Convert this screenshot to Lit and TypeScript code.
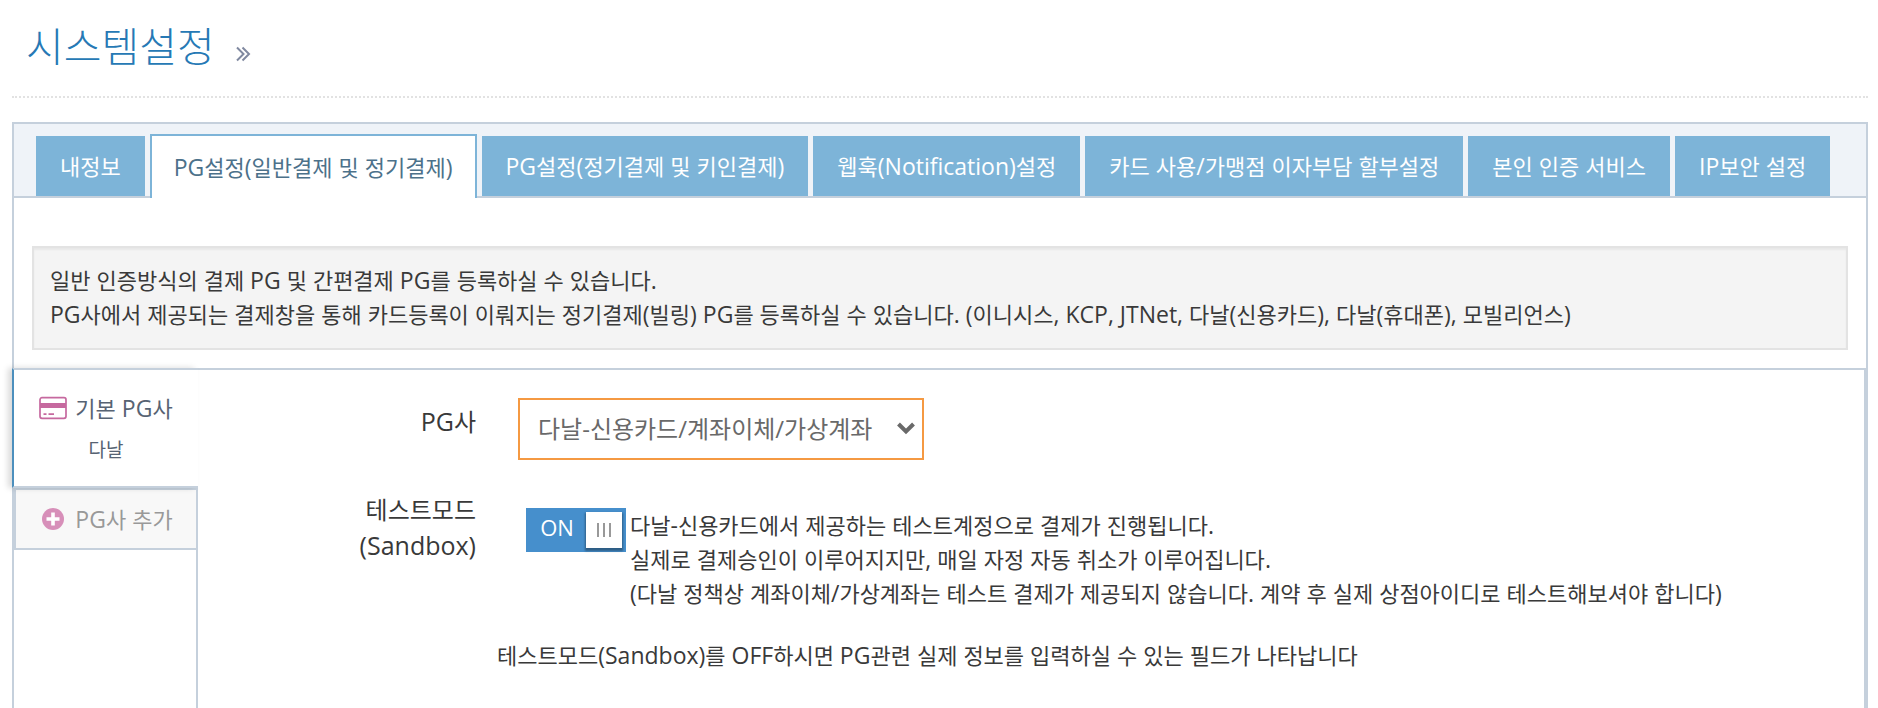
import { LitElement, html, css } from "lit";
import { customElement, state } from "lit/decorators.js";

const TABS = [
  "내정보",
  "PG설정(일반결제 및 정기결제)",
  "PG설정(정기결제 및 키인결제)",
  "웹훅(Notification)설정",
  "카드 사용/가맹점 이자부담 할부설정",
  "본인 인증 서비스",
  "IP보안 설정",
];

/* Latin runs are set a little larger than the Hangul around them. */
const mixed = (text: string) =>
  text
    .split(/([\x20-\x7e]+)/)
    .filter(Boolean)
    .map((part) => (/^[\x20-\x7e]/.test(part) ? html`<span class="latin">${part}</span>` : part));

@customElement("app-root")
export class AppRoot extends LitElement {
  @state() private activeTab = 1;
  @state() private sandbox = true;

  static styles = css`
    :host {
      display: flex;
      flex-direction: column;
      box-sizing: border-box;
      min-height: 100vh;
      padding: 0 10px 0 12px;
      background: #fff;
      color: #393939;
      font-family: "Open Sans", "Noto Sans CJK KR", sans-serif;
      font-size: 22px;
      line-height: 34px;
      word-break: keep-all;
    }
    * {
      box-sizing: border-box;
    }
    button,
    select {
      font: inherit;
      margin: 0;
      border-radius: 0;
      cursor: pointer;
    }
    p {
      margin: 0;
    }
    .latin {
      font-size: 23px;
      line-height: 1;
    }
    .header {
      display: flex;
      align-items: center;
      gap: 20px;
      padding: 14px 14px 22px;
      border-bottom: 2px dotted #e2e2e2;
      margin-bottom: 24px;
    }
    .title {
      margin: 0;
      color: #2679b5;
      font-size: 41px;
      line-height: 60px;
      font-weight: 300;
      font-family: "Noto Sans CJK KR", sans-serif;
    }
    .more {
      width: 16px;
      height: 16px;
      margin-top: 20px;
      fill: none;
      stroke: #8089a0;
      stroke-width: 2;
    }
    .panel {
      flex: 1;
      display: flex;
      flex-direction: column;
      border: 2px solid #c5d0dc;
      border-bottom: 0;
    }
    .tabs {
      display: flex;
      align-items: flex-end;
      gap: 5px;
      padding: 10px 22px 0;
      background: #eff3f8;
      border-bottom: 2px solid #c5d0dc;
    }
    .tab {
      padding: 0 24px;
      height: 60px;
      border: 0;
      background: #7db4d8;
      color: #fff;
      white-space: nowrap;
    }
    .tab.active {
      height: 64px;
      padding: 0 22px;
      margin-bottom: -2px;
      background: #fff;
      border: 2px solid #7db4d8;
      border-bottom: 0;
      color: #4c718a;
    }
    .notice {
      margin: 48px 18px 18px;
      padding: 15px 16px 17px;
      border: 2px solid #e3e3e3;
      background: #f4f4f4;
      box-shadow: inset 0 2px 2px rgba(0, 0, 0, 0.05);
    }
    .body {
      flex: 1;
      display: flex;
    }
    .side {
      flex: none;
      width: 184px;
      display: flex;
      flex-direction: column;
      border-right: 2px solid #c5d0dc;
    }
    .pg {
      position: relative;
      margin: 0 -2px 0 -2px;
      padding: 18px 0 16px;
      border: 0 solid #c5d0dc;
      border-width: 2px 0;
      border-left: 2px solid #4c8fbd;
      background: #fff;
      color: #576373;
      box-shadow: -4px 0 6px rgba(0, 0, 0, 0.15);
      text-align: center;
      height: 120px;
    }
    .add {
      height: 62px;
      padding: 0;
      border: 2px solid #c5d0dc;
      border-right: 0;
      background: #f8f8f8;
      color: #999;
    }
    .row {
      display: flex;
      align-items: center;
      justify-content: center;
      gap: 8px;
      height: 40px;
    }
    .row svg {
      flex: none;
      width: 28px;
      height: 24px;
    }
    .sub {
      display: block;
      font-size: 19px;
      line-height: 44px;
    }
    .form {
      flex: 1;
      padding: 28px 16px 0 0;
      border-top: 2px solid #c5d0dc;
      border-right: 2px solid #c5d0dc;
      display: grid;
      grid-template-columns: 278px minmax(0, 1fr);
      column-gap: 42px;
      align-content: start;
    }
    .label {
      font-size: 24px;
      line-height: 36px;
      text-align: right;
      padding-top: 6px;
    }
    .label .latin {
      font-size: 25px;
    }
    .picker {
      position: relative;
      width: 406px;
      max-width: 100%;
    }
    .picker select {
      width: 100%;
      height: 62px;
      padding: 0 40px 0 18px;
      appearance: none;
      border: 2px solid #f59942;
      background: #fff;
      color: #696969;
      font-size: 24px;
    }
    .picker svg {
      position: absolute;
      right: 8px;
      top: 22px;
      width: 20px;
      height: 16px;
      pointer-events: none;
    }
    .mode {
      display: flex;
      align-items: flex-start;
      gap: 4px;
      padding: 48px 0 0 8px;
    }
    .mode-label {
      padding-top: 32px;
    }
    .switch {
      flex: none;
      display: flex;
      width: 100px;
      height: 44px;
      background: #468fcc;
      color: #fff;
      cursor: pointer;
      position: relative;
    }
    .switch input {
      position: absolute;
      inset: 0;
      width: 100%;
      height: 100%;
      margin: 0;
      opacity: 0;
      cursor: pointer;
    }
    .switch.off {
      flex-direction: row-reverse;
      background: #8b9aa3;
    }
    .state {
      flex: 1;
      padding-left: 6px;
      text-align: center;
      line-height: 38px;
      font-weight: 500;
    }
    .knob {
      width: 36px;
      margin: 4px;
      background: #fff;
      box-shadow: 0 2px 2px 1px rgba(0, 0, 0, 0.35);
      display: flex;
      align-items: center;
      justify-content: center;
      gap: 4px;
    }
    .knob i {
      width: 2px;
      height: 14px;
      background: #999;
    }
    .help {
      grid-column: 1 / -1;
      padding: 28px 0 28px 299px;
    }
  `;

  render() {
    return html`
      <header class="header">
        <h1 class="title">시스템설정</h1>
        <svg class="more" viewBox="0 0 16 16" aria-hidden="true">
          <path d="M2 1.5 8.5 8 2 14.5M7.500 1.500 14 8 7.500 14.500" />
        </svg>
      </header>
      <main class="panel">
        <nav class="tabs" role="tablist">
          ${TABS.map(
            (label, i) => html`<button
              class="tab ${i === this.activeTab ? "active" : ""}"
              role="tab"
              aria-selected=${i === this.activeTab}
              @click=${() => (this.activeTab = i)}
            >${mixed(label)}</button>`
          )}
        </nav>
        <div class="notice">
          <p>${mixed("일반 인증방식의 결제 PG 및 간편결제 PG를 등록하실 수 있습니다.")}</p>
          <p>${mixed("PG사에서 제공되는 결제창을 통해 카드등록이 이뤄지는 정기결제(빌링) PG를 등록하실 수 있습니다. (이니시스, KCP, JTNet, 다날(신용카드), 다날(휴대폰), 모빌리언스)")}</p>
        </div>
        <div class="body">
          <div class="side">
            <button class="pg">
              <span class="row">
                <svg viewBox="0 0 28 24" aria-hidden="true">
                  <rect x="1" y="1.700" width="26" height="20.600" rx="2" fill="none" stroke="#c6699f" stroke-width="1.700" />
                  <path fill="#c6699f" d="M1 7h26v5H1zM4.500 17.200h3v1.800h-3zM9.500 17.200h5.500v1.800H9.500z" />
                </svg>
                <span>${mixed("기본 PG사")}</span>
              </span>
              <span class="sub">다날</span>
            </button>
            <button class="add">
              <span class="row">
                <svg viewBox="0 0 28 24" aria-hidden="true">
                  <circle cx="14" cy="12" r="11" fill="#d78fb9" />
                  <path d="M14 5.500v13M7.500 12h13" stroke="#fff" stroke-width="3.600" />
                </svg>
                <span>${mixed("PG사 추가")}</span>
              </span>
            </button>
          </div>
          <form class="form">
            <label class="label" for="pg">${mixed("PG사")}</label>
            <div class="picker">
              <select id="pg">
                <option>다날-신용카드/계좌이체/가상계좌</option>
              </select>
              <svg viewBox="0 0 20 16" aria-hidden="true">
                <path d="M2.500 4 10 11.500 17.500 4" fill="none" stroke="#696969" stroke-width="4" />
              </svg>
            </div>
            <label class="label mode-label" for="sandbox">테스트모드<br />${mixed("(Sandbox)")}</label>
            <div class="mode">
              <div class="switch ${this.sandbox ? "" : "off"}">
                <span class="state">${this.sandbox ? "ON" : "OFF"}</span>
                <span class="knob"><i></i><i></i><i></i></span>
                <input id="sandbox" type="checkbox" .checked=${this.sandbox}
                  @change=${(e: Event) => (this.sandbox = (e.target as HTMLInputElement).checked)} />
              </div>
              <div>
                <p>${mixed("다날-신용카드에서 제공하는 테스트계정으로 결제가 진행됩니다.")}</p>
                <p>${mixed("실제로 결제승인이 이루어지지만, 매일 자정 자동 취소가 이루어집니다.")}</p>
                <p>${mixed("(다날 정책상 계좌이체/가상계좌는 테스트 결제가 제공되지 않습니다. 계약 후 실제 상점아이디로 테스트해보셔야 합니다)")}</p>
              </div>
            </div>
            <p class="help">${mixed("테스트모드(Sandbox)를 OFF하시면 PG관련 실제 정보를 입력하실 수 있는 필드가 나타납니다")}</p>
          </form>
        </div>
      </main>
    `;
  }
}
